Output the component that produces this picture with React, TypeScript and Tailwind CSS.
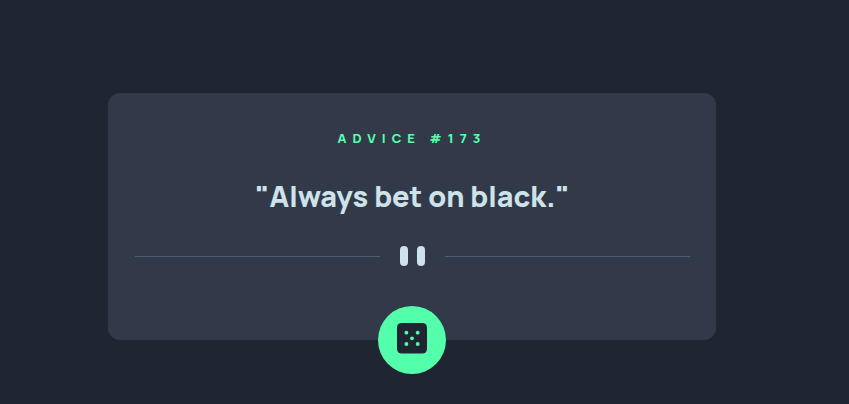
function Divider() {
  return (
    <div className="mt-7 flex h-5 items-center justify-between">
      <div className="mt-px h-px w-[245px] bg-[#4f5d74]" />
      <div className="flex gap-[9.5px]">
        <div className="h-5 w-[7.8px] rounded-full bg-[#cee3e9]" />
        <div className="h-5 w-[7.8px] rounded-full bg-[#cee3e9]" />
      </div>
      <div className="mt-px h-px w-[245px] bg-[#4f5d74]" />
    </div>
  );
}

function DiceIcon() {
  return (
    <svg width="30" height="31" viewBox="0 0 30 31" aria-hidden="true">
      <rect width="30" height="30.5" rx="4.5" fill="#1f2632" />
      <g fill="#53ffaa">
        <circle cx="9.4" cy="9.7" r="1.9" />
        <circle cx="20.7" cy="9.7" r="1.9" />
        <circle cx="15" cy="15.3" r="1.9" />
        <circle cx="9.4" cy="21" r="1.9" />
        <circle cx="20.7" cy="21" r="1.9" />
      </g>
    </svg>
  );
}

export default function App() {
  return (
    <main className="h-[404px] w-full overflow-hidden bg-[#1f2632] pt-[93px] pl-[108px] font-['Manrope','Inter',sans-serif]">
      <section className="relative h-[247px] w-[608px] rounded-xl bg-[#323a49] pt-[35px] pr-[26px] pl-[27px]">
        <h1 className="pr-px text-center text-[13px] leading-5 font-extrabold tracking-[6px] text-[#53ffaa]">
          ADVICE #173
        </h1>
        <p className="mt-[27px] text-center text-[28.8px] leading-[43px] font-extrabold whitespace-nowrap text-[#cee3e9]">
          "Always bet on black."
        </p>
        <Divider />
        <button
          aria-label="New advice"
          className="absolute -bottom-[34px] left-[270px] flex size-[68px] items-center justify-center rounded-full bg-[#53ffaa] pb-[3px]"
        >
          <DiceIcon />
        </button>
      </section>
    </main>
  );
}
